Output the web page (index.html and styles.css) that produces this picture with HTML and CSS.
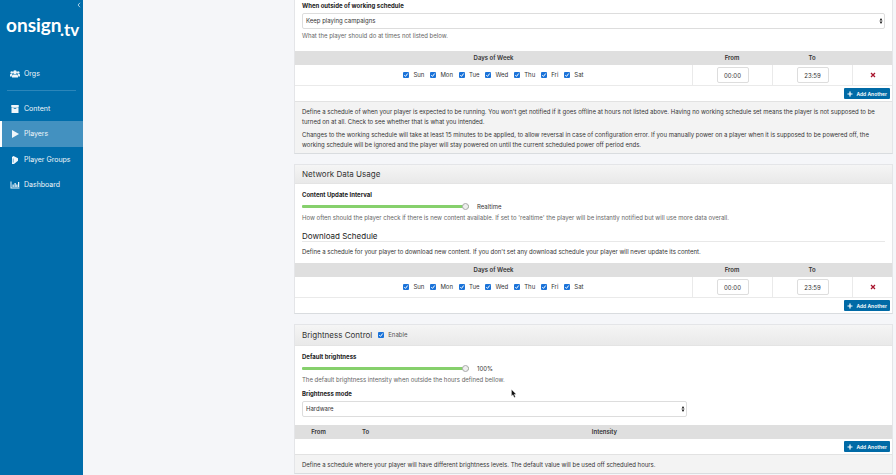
FILE: index.html
```html
<!DOCTYPE html>
<html lang="en">
<head>
    <meta charset="UTF-8">
    <meta name="viewport" content="width=device-width, initial-scale=1.0">
    <title>Player settings - onsign.tv</title>
    <link rel="stylesheet" href="styles.css">
</head>
<body>

    <aside class="sidebar">
        <button type="button" class="collapse" aria-label="Collapse menu">
            <svg viewBox="0 0 4 6" width="4" height="6"><path d="M3 .8 1 3l2 2.2" fill="none" stroke="currentColor" stroke-width=".8"/></svg>
        </button>
        <a href="#" class="logo" aria-label="onsign.tv">
            <svg viewBox="0 0 74 28" width="74" height="28">
                <text x="0" y="18" font-size="19">onsign</text>
                <text x="54" y="22" font-size="17">.tv</text>
            </svg>
        </a>
        <nav>
            <a href="#" class="nav-item">
                <svg viewBox="0 0 20 16"><circle cx="3.500" cy="5" r="2.600"/><circle cx="16.500" cy="5" r="2.600"/><circle cx="10" cy="4.500" r="3.800"/><path d="M0 13V9.500q0-1.500 1.500-1.500H5q-1.500 1.500-1.500 5zM20 13V9.500Q20 8 18.500 8H15q1.500 1.500 1.500 5zM4 15v-3q0-3 3-3h6q3 0 3 3v3z"/></svg>
                Orgs
            </a>
            <hr>
            <a href="#" class="nav-item">
                <svg viewBox="0 0 20 16"><path d="M2.500 0h15v4h-15zM3 4.500h14V16H3zM7.500 6.500V8h5V6.500z" fill-rule="evenodd"/></svg>
                Content
            </a>
            <a href="#" class="nav-item active">
                <svg viewBox="0 0 20 16"><path d="M4 0l14 8-14 8z"/></svg>
                Players
            </a>
            <a href="#" class="nav-item">
                <svg viewBox="0 0 20 16"><path d="M4 2l3-2 9 4.500v5L8 16H4z"/><path d="M6.500 5v8" stroke="#006dab" fill="none"/></svg>
                Player Groups
            </a>
            <a href="#" class="nav-item">
                <svg viewBox="0 0 20 16"><path d="M1 1h2v12h16v2H1zM5 7h2.500v5H5zM9 4h2.500v8H9zM12.500 7H15v5h-2.500zM16 2h2.500v10H16z"/></svg>
                Dashboard
            </a>
        </nav>
    </aside>

    <main class="content">

        <section class="panel panel-first">
            <div class="panel-body">
                <label class="title" for="outside">When outside of working schedule</label>
                <select id="outside">
                    <option>Keep playing campaigns</option>
                </select>
                <p class="help">What the player should do at times not listed below.</p>
            </div>
            <table class="schedule">
                <thead>
                    <tr><th>Days of Week</th><th class="time">From</th><th class="time">To</th><th class="remove"></th></tr>
                </thead>
                <tbody>
                    <tr>
                        <td>
                            <div class="days">
                                <label><input type="checkbox" checked>Sun</label>
                                <label><input type="checkbox" checked>Mon</label>
                                <label><input type="checkbox" checked>Tue</label>
                                <label><input type="checkbox" checked>Wed</label>
                                <label><input type="checkbox" checked>Thu</label>
                                <label><input type="checkbox" checked>Fri</label>
                                <label><input type="checkbox" checked>Sat</label>
                            </div>
                        </td>
                        <td><input type="text" class="hour" value="00:00" aria-label="From"></td>
                        <td><input type="text" class="hour" value="23:59" aria-label="To"></td>
                        <td><button type="button" class="delete" aria-label="Remove"><svg viewBox="0 0 6 6" width="6" height="6"><path d="M1 1l4 4M5 1L1 5"/></svg></button></td>
                    </tr>
                </tbody>
            </table>
            <div class="actions">
                <button type="button" class="add"><svg viewBox="0 0 6 6" width="6" height="6"><path d="M3 .5v5M.5 3h5"/></svg>Add Another</button>
            </div>
            <div class="panel-footer">
                <p>Define a schedule of when your player is expected to be running. You won't get notified if it goes offline at hours not listed above. Having no working schedule set means the player is not supposed to be turned on at all. Check to see whether that is what you intended.</p>
                <p>Changes to the working schedule will take at least 15 minutes to be applied, to allow reversal in case of configuration error. If you manually power on a player when it is supposed to be powered off, the working schedule will be ignored and the player will stay powered on until the current scheduled power off period ends.</p>
            </div>
        </section>

        <section class="panel">
            <div class="panel-header"><h2>Network Data Usage</h2></div>
            <div class="panel-body">
                <label class="title" for="interval">Content Update Interval</label>
                <div class="slider">
                    <input type="range" id="interval" min="0" max="100" value="100">
                    <output for="interval">Realtime</output>
                </div>
                <p class="help">How often should the player check if there is new content available. If set to 'realtime' the player will be instantly notified but will use more data overall.</p>
                <h3>Download Schedule</h3>
                <p class="intro">Define a schedule for your player to download new content. If you don't set any download schedule your player will never update its content.</p>
            </div>
            <table class="schedule">
                <thead>
                    <tr><th>Days of Week</th><th class="time">From</th><th class="time">To</th><th class="remove"></th></tr>
                </thead>
                <tbody>
                    <tr>
                        <td>
                            <div class="days">
                                <label><input type="checkbox" checked>Sun</label>
                                <label><input type="checkbox" checked>Mon</label>
                                <label><input type="checkbox" checked>Tue</label>
                                <label><input type="checkbox" checked>Wed</label>
                                <label><input type="checkbox" checked>Thu</label>
                                <label><input type="checkbox" checked>Fri</label>
                                <label><input type="checkbox" checked>Sat</label>
                            </div>
                        </td>
                        <td><input type="text" class="hour" value="00:00" aria-label="From"></td>
                        <td><input type="text" class="hour" value="23:59" aria-label="To"></td>
                        <td><button type="button" class="delete" aria-label="Remove"><svg viewBox="0 0 6 6" width="6" height="6"><path d="M1 1l4 4M5 1L1 5"/></svg></button></td>
                    </tr>
                </tbody>
            </table>
            <div class="actions">
                <button type="button" class="add"><svg viewBox="0 0 6 6" width="6" height="6"><path d="M3 .5v5M.5 3h5"/></svg>Add Another</button>
            </div>
        </section>

        <section class="panel">
            <div class="panel-header with-toggle">
                <h2>Brightness Control</h2>
                <label class="enable"><input type="checkbox" checked>Enable</label>
            </div>
            <div class="panel-body">
                <label class="title" for="brightness">Default brightness</label>
                <div class="slider">
                    <input type="range" id="brightness" min="0" max="100" value="100">
                    <output for="brightness">100%</output>
                </div>
                <p class="help">The default brightness intensity when outside the hours defined bellow.</p>
                <label class="title" for="mode">Brightness mode</label>
                <select id="mode" class="mode">
                    <option>Hardware</option>
                </select>
            </div>
            <table class="schedule levels">
                <thead>
                    <tr><th class="level-time">From</th><th class="level-time">To</th><th>Intensity</th><th class="remove"></th></tr>
                </thead>
            </table>
            <div class="actions">
                <button type="button" class="add"><svg viewBox="0 0 6 6" width="6" height="6"><path d="M3 .5v5M.5 3h5"/></svg>Add Another</button>
            </div>
            <div class="panel-footer">
                <p>Define a schedule where your player will have different brightness levels. The default value will be used off scheduled hours.</p>
            </div>
        </section>

    </main>

    <svg class="pointer" viewBox="0 0 6 9" width="6" height="9"><path d="M.5.500v6.500l1.500-1.300 1.200 2.800 1.200-.5-1.200-2.700h2z" fill="#111" stroke="#fff" stroke-width=".3"/></svg>

</body>
</html>
```

FILE: styles.css
```css
* { box-sizing: border-box; }
body { display: flex; margin: 0; height: 100vh; overflow: hidden; background: #f5f6f9; color: #333; font: 6px/10px Inter, "Liberation Sans", sans-serif; }
h2, h3, p { margin: 0; font-weight: 400; }
button, input, select { margin: 0; font: inherit; color: inherit; }

/* sidebar */
.sidebar { display: flex; flex-direction: column; flex: 0 0 83px; background: #006dab; color: #fff; }
.collapse { align-self: flex-end; display: flex; width: 8px; height: 10px; padding: 2px; border: 0; background: none; color: #cfe4f1; }
.logo { height: 28px; margin: 4px 0 19px 6px; }
.logo text { font-family: Lato, sans-serif; font-weight: 700; fill: #fff; }
nav hr { height: 1px; margin: 4px 7px 5px; border: 0; background: #2c86ba; }
.nav-item { display: flex; align-items: center; gap: 4px; height: 25px; padding-left: 8px; border-left: 2px solid transparent; color: #f0f6fa; font-size: 7px; text-decoration: none; }
.nav-item svg { width: 10px; height: 8px; fill: currentColor; }
.nav-item.active { height: 26px; border-left-color: #fff; background: #4391c0; }

/* panels */
.content { flex: 1; min-width: 0; padding: 0 3px 0 211px; }
.panel { margin-bottom: 10px; border: 1px solid #e4e5e8; border-bottom-color: #d9dcdf; background: #fff; }
.panel-first { border-top: 0; }
.panel-first .panel-body { padding: 1px 7px 10px; }
.panel-header { display: flex; align-items: center; gap: 6px; padding: 4px 7px; border-bottom: 1px solid #e4e4e4; background: linear-gradient(#f5f5f5, #e9e9e9); }
.with-toggle { padding: 5px 7px; }
.panel-body { padding: 6px 7px; }
.panel-footer { padding: 5px 7px 3px; border-top: 1px solid #e2e2e2; background: #f3f3f3; }
.panel-footer p + p { margin-top: 3px; }
h2 { font-size: 8px; line-height: 10px; }
h3 { margin-top: 8px; border-bottom: 1px solid #e8e8e8; font-size: 8px; line-height: 10px; color: #222; }
.title { display: block; color: #222; font-weight: 700; }
.help { color: #666; }
.help + .title { margin-top: 4px; }
.intro { margin-top: 5px; }

/* form controls */
select { display: block; width: 100%; height: 16px; margin: 2px 0; padding: 0 3px; border: 1px solid #ddd; border-radius: 2px; appearance: none; background: #fff url("data:image/svg+xml,%3Csvg xmlns='http://www.w3.org/2000/svg' viewBox='0 0 4 6'%3E%3Cpath d='M2 0l1.500 2.400h-3zM2 6L.5 3.600h3z' fill='%23222'/%3E%3C/svg%3E") no-repeat right 1px center / 4px 6px; }
.mode { width: 66%; }
input[type="checkbox"] { flex: none; width: 6px; height: 6px; border-radius: 1px; appearance: none; }
input[type="checkbox"]:checked { background: #1a73d9 url("data:image/svg+xml,%3Csvg xmlns='http://www.w3.org/2000/svg' viewBox='0 0 6 6'%3E%3Cpath d='M1.300 3.200l1.200 1.200 2.200-2.900' fill='none' stroke='%23fff'/%3E%3C/svg%3E"); }
.enable { display: flex; align-items: center; gap: 4px; color: #555; }
.slider { display: flex; align-items: center; gap: 8px; height: 13px; }
input[type="range"] { width: 167px; height: 7px; appearance: none; background: none; }
input[type="range"]::-webkit-slider-runnable-track { height: 3px; border-radius: 1px; background: #86d06c; }
input[type="range"]::-webkit-slider-thumb { width: 7px; height: 7px; margin-top: -2px; border: 1px solid #aaa; border-radius: 50%; appearance: none; background: #eee; }

/* schedule tables */
.schedule { width: 100%; border-spacing: 0; table-layout: fixed; }
.schedule th { height: 14px; padding: 0; background: #dfdfdf; font-weight: 600; }
.schedule td { height: 21px; padding: 0; border-bottom: 1px solid #eaeaea; text-align: center; }
.schedule td + td { border-left: 1px solid #eaeaea; }
.time { width: 80px; }
.remove { width: 40px; }
.level-time { width: 47px; }
.levels .remove { width: 72px; }
.days { display: flex; justify-content: center; gap: 6px; }
.days label { display: flex; align-items: center; gap: 4px; }
.hour { display: block; width: 32px; height: 16px; margin: 0 auto; padding: 0; border: 1px solid #ddd; border-radius: 2px; text-align: center; }
.delete { display: flex; margin: 0 auto; padding: 0; border: 0; background: none; }
.delete path { fill: none; stroke: #a8142d; stroke-width: 1.3; }
.actions { display: flex; justify-content: flex-end; padding: 2px; }
.add { display: flex; align-items: center; gap: 3px; height: 11px; padding: 0 3px; border: 0; border-radius: 1px; background: #006aa6; color: #fff; font-size: 5px; font-weight: 600; }
.add path { fill: none; stroke: #fff; stroke-width: 1.2; }

.pointer { position: absolute; left: 511px; top: 389px; }
```
